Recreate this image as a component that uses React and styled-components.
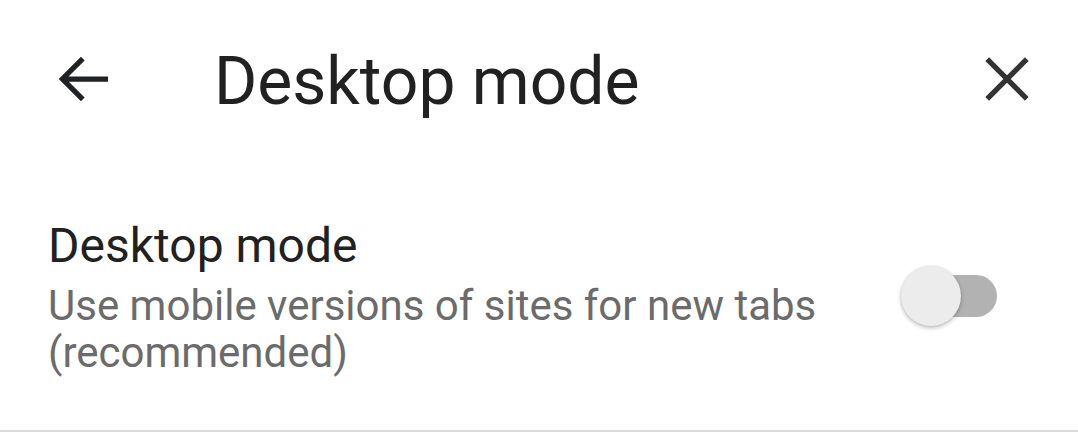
import React from "react";
import styled, { createGlobalStyle } from "styled-components";

const GlobalStyle = createGlobalStyle`
	html, body {
		margin: 0;
		padding: 0;
		background: #fff;
	}

	body {
		font-family: Roboto, "Noto Sans", sans-serif;
		-webkit-font-smoothing: antialiased;
	}
`;

class App extends React.Component {
	state = {
		desktopMode: false
	};

	render() {
		return (
			<Page>
				<GlobalStyle />
				<TopBar>
					<IconButton aria-label="Back">
						<svg width="72" height="72" viewBox="0 0 24 24">
							<path
								d="M20 12H5.2M11.6 5.2L4.8 12l6.8 6.8"
								fill="none"
								stroke="#202124"
								strokeWidth="1.75"
							/>
						</svg>
					</IconButton>
					<Title>Desktop mode</Title>
					<IconButton aria-label="Close">
						<svg width="72" height="72" viewBox="0 0 24 24">
							<path
								d="M5.4 5.4l13.2 13.2M18.6 5.4L5.4 18.6"
								fill="none"
								stroke="#333"
								strokeWidth="1.75"
							/>
						</svg>
					</IconButton>
				</TopBar>
				<SettingRow onClick={this.toggle}>
					<SettingText>
						<SettingTitle>Desktop mode</SettingTitle>
						<SettingSummary>
							Use mobile versions of sites for new tabs
							<br />
							(recommended)
						</SettingSummary>
					</SettingText>
					<Switch on={this.state.desktopMode}>
						<Thumb on={this.state.desktopMode} />
					</Switch>
				</SettingRow>
				<Divider />
			</Page>
		);
	}

	toggle = () => {
		this.setState(prev => ({ desktopMode: !prev.desktopMode }));
	};
}

const Page = styled.div`
	width: 1078px;
	height: 439px;
	background: #fff;
	display: flex;
	flex-direction: column;
	overflow: hidden;
`;

const TopBar = styled.header`
	display: flex;
	align-items: flex-start;
	height: 164px;
	padding: 43px 35px 0 48px;
	box-sizing: border-box;
`;

const IconButton = styled.button`
	background: none;
	border: none;
	padding: 0;
	width: 72px;
	height: 72px;
	display: flex;
	align-items: center;
	justify-content: center;
	cursor: pointer;
	outline: none;
`;

const Title = styled.h1`
	flex: 1;
	margin: 0 0 0 94px;
	font-size: 66px;
	font-weight: 400;
	line-height: normal;
	color: #212121;
`;

const SettingRow = styled.div`
	display: flex;
	align-items: flex-start;
	justify-content: space-between;
	padding: 54px 81px 0 48px;
	cursor: pointer;
`;

const SettingText = styled.div`
	display: flex;
	flex-direction: column;
`;

const SettingTitle = styled.div`
	font-size: 48px;
	line-height: 56px;
	color: #212121;
	margin-bottom: 8px;
`;

const SettingSummary = styled.div`
	font-size: 42px;
	line-height: 47px;
	color: #6b6b6b;
`;

const Switch = styled.div`
	position: relative;
	width: 62px;
	height: 42px;
	margin-top: 57px;
	border-radius: 21px;
	background: ${props => (props.on ? "#8ab4f8" : "#b2b2b2")};
`;

const Thumb = styled.div`
	position: absolute;
	top: 50%;
	left: ${props => (props.on ? "32px" : "-34px")};
	width: 60px;
	height: 60px;
	margin-top: -30px;
	border-radius: 50%;
	background: ${props => (props.on ? "#1a73e8" : "#ececec")};
	box-shadow: 0 2px 4px rgba(0, 0, 0, 0.25), 0 0 2px rgba(0, 0, 0, 0.1);
	transition: left 0.2s ease-in-out;
`;

const Divider = styled.div`
	margin-top: auto;
	margin-bottom: 7px;
	height: 2px;
	background: #dcdcdc;
`;

export default App;
